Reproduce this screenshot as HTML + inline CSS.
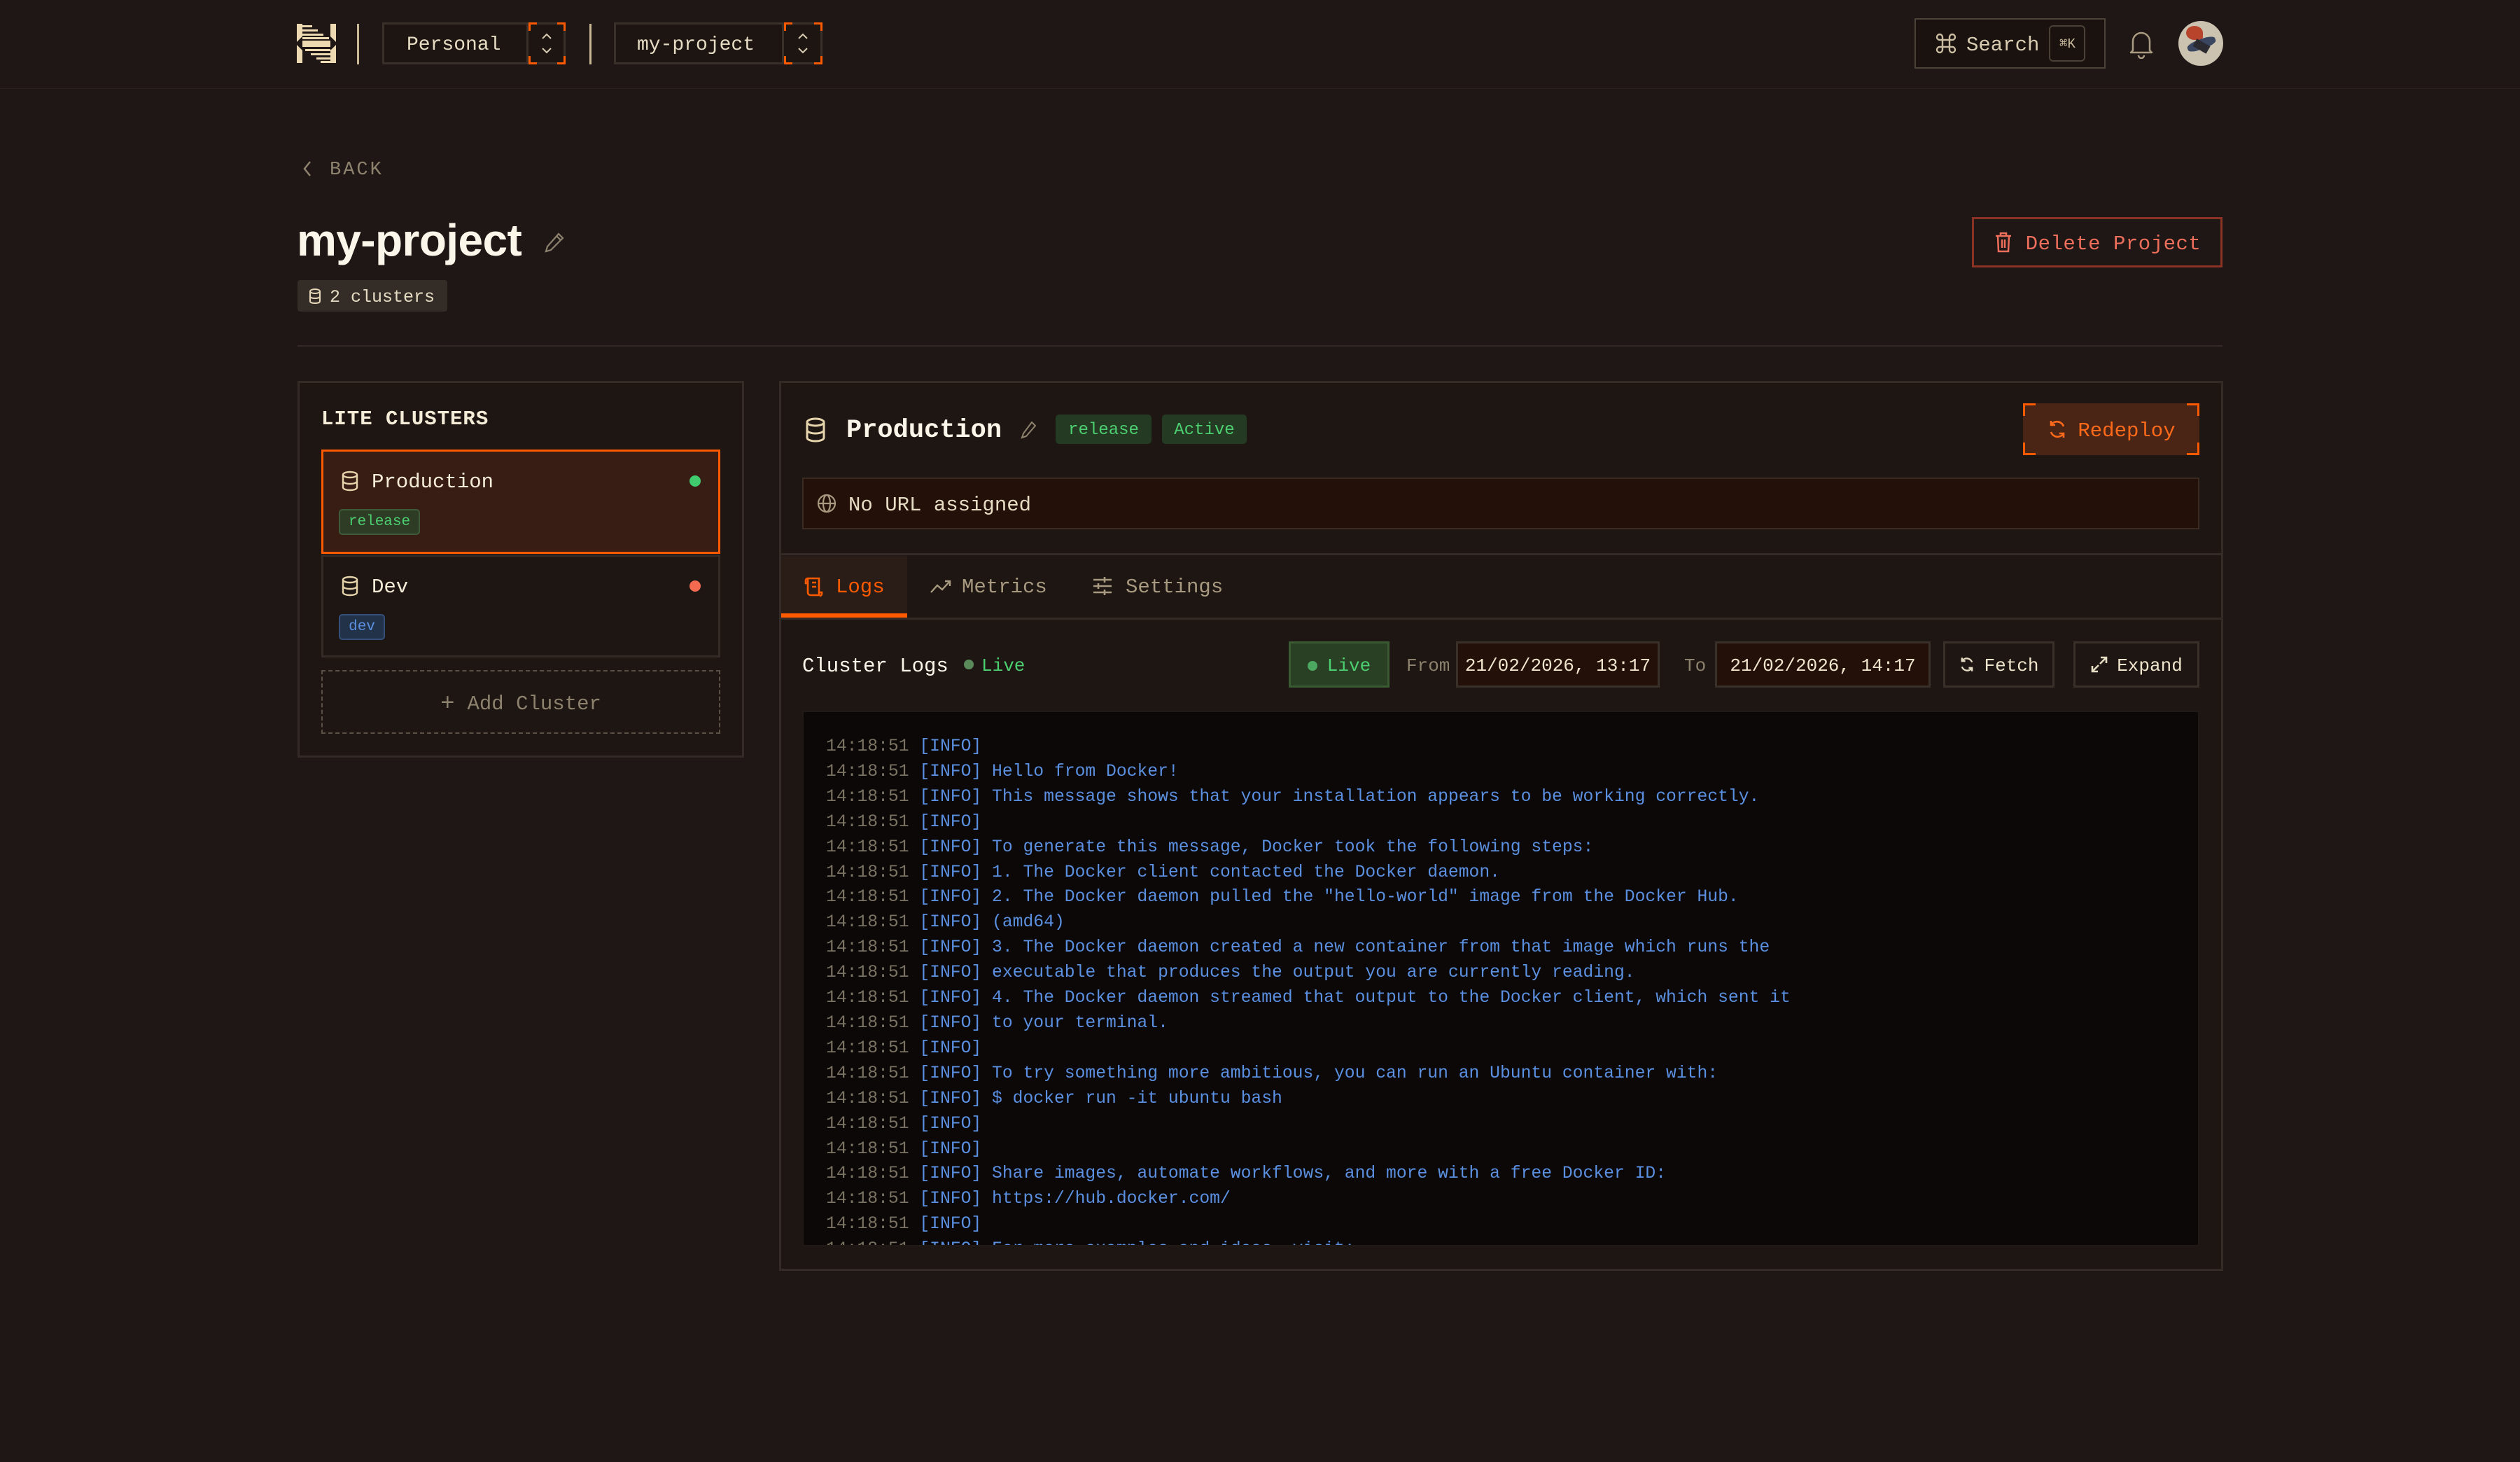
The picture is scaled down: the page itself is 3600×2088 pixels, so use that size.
<!DOCTYPE html>
<html><head><meta charset="utf-8"><style>
*{box-sizing:border-box;margin:0;padding:0}
body{width:3600px;height:2088px;background:#1f1715;font-family:"Liberation Mono",monospace;color:#efe4cc;position:relative;overflow:hidden}
.a{position:absolute}
.f{display:flex;align-items:center}
svg{display:block}
.sel{border:3px solid #3a302a;background:#1c1512;height:60px}
.corner{position:absolute;width:12px;height:12px;border-color:#ff5a00;border-style:solid}
.log{font-size:24.7px;line-height:35.9px;white-space:pre;color:#5b8fe0}
.log .t{color:#7a7262}
.btn{border:3px solid #3a302a;height:66px;font-size:26px;color:#efe4cc}
</style></head><body>

<!-- header -->
<svg class="a" style="left:422px;top:32px" width="60" height="60" viewBox="0 0 60 60">
<g fill="#ecd9b2">
<path d="M2 2h8v18l-8 8z"/><path d="M58 2h-8v18l8 8z"/>
<path d="M2 58h8V40l-8-8z"/><path d="M58 58h-8V40l8-8z"/>
<rect x="10" y="26" width="40" height="9"/>
<rect x="10" y="4" width="14" height="3"/><rect x="10" y="10" width="22" height="3"/><rect x="10" y="16" width="30" height="3"/><rect x="10" y="21" width="38" height="3"/>
<rect x="14" y="38" width="36" height="3"/><rect x="22" y="44" width="28" height="3"/><rect x="30" y="50" width="20" height="3"/><rect x="36" y="55" width="14" height="3"/>
</g></svg>
<div class="a" style="left:510px;top:34px;width:3px;height:58px;background:#c9b894"></div>
<div class="a sel f" style="left:546px;top:32px;width:262px">
 <span style="margin-left:32px;margin-top:4px;font-size:28px;color:#e6dcc4">Personal</span>
</div>
<div class="a" style="left:752px;top:32px;width:56px;height:60px;border-left:3px solid #3a302a">
 <div class="corner" style="left:0;top:0;border-width:3px 0 0 3px"></div><div class="corner" style="right:0;top:0;border-width:3px 3px 0 0"></div>
 <div class="corner" style="left:0;bottom:0;border-width:0 0 3px 3px"></div><div class="corner" style="right:0;bottom:0;border-width:0 3px 3px 0"></div>
 <svg class="a" style="left:18px;top:14px" width="16" height="32" viewBox="0 0 16 32"><path d="M2 9l6-6 6 6M2 23l6 6 6-6" stroke="#d8ccb2" stroke-width="2" fill="none"/></svg>
</div>
<div class="a" style="left:842px;top:34px;width:3px;height:58px;background:#c9b894"></div>
<div class="a sel f" style="left:877px;top:32px;width:298px">
 <span style="margin-left:30px;margin-top:4px;font-size:28px;color:#e6dcc4">my-project</span>
</div>
<div class="a" style="left:1117px;top:32px;width:58px;height:60px;border-left:3px solid #3a302a">
 <div class="corner" style="left:0;top:0;border-width:3px 0 0 3px"></div><div class="corner" style="right:0;top:0;border-width:3px 3px 0 0"></div>
 <div class="corner" style="left:0;bottom:0;border-width:0 0 3px 3px"></div><div class="corner" style="right:0;bottom:0;border-width:0 3px 3px 0"></div>
 <svg class="a" style="left:19px;top:14px" width="16" height="32" viewBox="0 0 16 32"><path d="M2 9l6-6 6 6M2 23l6 6 6-6" stroke="#d8ccb2" stroke-width="2" fill="none"/></svg>
</div>

<div class="a f" style="left:2735px;top:26px;width:273px;height:72px;border:2px solid #4a4236;background:#1a120e">
 <svg style="margin-left:28px" width="30" height="30" viewBox="0 0 30 30"><path d="M10 10h10v10H10zM10 10V6a4 4 0 1 0-4 4h4M20 10V6a4 4 0 1 1 4 4h-4M10 20v4a4 4 0 1 1-4-4h4M20 20v4a4 4 0 1 0 4-4h-4" stroke="#c9bca0" stroke-width="2.4" fill="none"/></svg>
 <span style="margin-left:14px;margin-top:4px;font-size:29px;color:#d8ccb2">Search</span>
 <span class="f" style="margin-left:14px;width:52px;height:52px;border:2px solid #4a4236;border-radius:6px;justify-content:center;font-size:19px;color:#c9bca0">⌘K</span>
</div>
<svg class="a" style="left:3041px;top:42px" width="36" height="42" viewBox="0 0 36 42"><path d="M6 30V17a12 12 0 0 1 24 0v13l3 3H3z M14 37a4 4 0 0 0 8 0" stroke="#a89a80" stroke-width="2.5" fill="none" stroke-linejoin="round"/></svg>
<div class="a" style="left:3112px;top:30px;width:64px;height:64px;border-radius:50%;background:#cbc3b0;overflow:hidden">
 <div class="a" style="left:11px;top:7px;width:24px;height:20px;border-radius:50% 50% 20% 50%;background:#b8442c"></div>
 <div class="a" style="left:12px;top:26px;width:42px;height:14px;background:#3a4660;transform:rotate(-20deg);border-radius:40%"></div>
 <div class="a" style="left:22px;top:30px;width:22px;height:12px;background:#2a2a30;transform:rotate(30deg)"></div>
</div>
<div class="a" style="left:0;top:126px;width:3600px;height:1px;background:#2a211d"></div>

<!-- back -->
<svg class="a" style="left:432px;top:228px" width="14" height="26" viewBox="0 0 14 26"><path d="M11 3L3 13l8 10" stroke="#8d826e" stroke-width="2.5" fill="none"/></svg>
<div class="a" style="left:471px;top:228px;font-size:27px;letter-spacing:3px;color:#8d826e">BACK</div>

<div class="a" style="left:424px;top:306px;font-family:'Liberation Sans',sans-serif;font-weight:bold;font-size:64px;color:#fbf6ea;letter-spacing:-0.6px">my-project</div>
<svg class="a" style="left:776px;top:330px" width="32" height="32" viewBox="0 0 32 32"><path d="M22 4l6 6L11 27l-7 2 2-7z M19 7l6 6" stroke="#8d826e" stroke-width="2.2" fill="none"/></svg>
<div class="a f" style="left:425px;top:400px;width:214px;height:45px;background:#342c26;border-radius:4px">
 <svg style="margin-left:16px" width="18" height="24" viewBox="0 0 18 24"><ellipse cx="9" cy="5" rx="7" ry="3" stroke="#e6d8b8" stroke-width="2" fill="none"/><path d="M2 5v14c0 2 3 3 7 3s7-1 7-3V5M2 12c0 2 3 3 7 3s7-1 7-3" stroke="#e6d8b8" stroke-width="2" fill="none"/></svg>
 <span style="margin-left:12px;margin-top:3px;font-size:25px;color:#e6dcc4">2 clusters</span>
</div>

<div class="a f" style="left:2817px;top:310px;width:358px;height:72px;border:3px solid #8a3325;justify-content:center">
 <svg width="28" height="32" viewBox="0 0 28 32"><path d="M3 7h22M10 7V3h8v4M6 7l1 22h14l1-22M12 12v12M16 12v12" stroke="#ee6e5c" stroke-width="2.5" fill="none"/></svg>
 <span style="margin-left:18px;margin-top:4px;font-size:29px;color:#ee6e5c;letter-spacing:.5px">Delete Project</span>
</div>
<div class="a" style="left:425px;top:493px;width:2750px;height:2px;background:#332a25"></div>

<!-- left panel -->
<div class="a" style="left:425px;top:544px;width:638px;height:538px;border:3px solid #342b26;background:#1e1612"></div>
<div class="a" style="left:459px;top:582px;font-size:29px;font-weight:bold;color:#f5ecd8;letter-spacing:1px">LITE CLUSTERS</div>
<div class="a" style="left:459px;top:642px;width:570px;height:149px;border:3px solid #ff5a00;background:#381d14"></div>
<svg class="a" style="left:488px;top:672px" width="24" height="30" viewBox="0 0 24 30"><ellipse cx="12" cy="6" rx="10" ry="4" stroke="#e6d4ac" stroke-width="2.4" fill="none"/><path d="M2 6v18c0 2.5 4.5 4 10 4s10-1.5 10-4V6M2 15c0 2.5 4.5 4 10 4s10-1.5 10-4" stroke="#e6d4ac" stroke-width="2.4" fill="none"/></svg>
<div class="a" style="left:531px;top:672px;font-size:29px;color:#f5ecd8">Production</div>
<div class="a" style="left:985px;top:679px;width:16px;height:16px;border-radius:50%;background:#3fcb6e"></div>
<div class="a f" style="left:484px;top:727px;width:116px;height:37px;border:2px solid #3e5a38;background:#2e3c26;border-radius:5px;justify-content:center;font-size:21px;color:#4ccf70">release</div>
<div class="a" style="left:459px;top:792px;width:570px;height:147px;border:3px solid #342b26"></div>
<svg class="a" style="left:488px;top:822px" width="24" height="30" viewBox="0 0 24 30"><ellipse cx="12" cy="6" rx="10" ry="4" stroke="#e6d4ac" stroke-width="2.4" fill="none"/><path d="M2 6v18c0 2.5 4.5 4 10 4s10-1.5 10-4V6M2 15c0 2.5 4.5 4 10 4s10-1.5 10-4" stroke="#e6d4ac" stroke-width="2.4" fill="none"/></svg>
<div class="a" style="left:531px;top:822px;font-size:29px;color:#f5ecd8">Dev</div>
<div class="a" style="left:985px;top:829px;width:16px;height:16px;border-radius:50%;background:#f26a50"></div>
<div class="a f" style="left:484px;top:877px;width:66px;height:37px;border:2px solid #34507a;background:#223249;border-radius:5px;justify-content:center;font-size:21px;color:#5b8fe0">dev</div>
<div class="a f" style="left:459px;top:957px;width:570px;height:91px;border:2px dashed #5a5045;justify-content:center;font-size:29px;color:#8d826e;padding-top:6px">
 <span style="font-size:34px;margin-right:18px">+</span>Add Cluster
</div>

<!-- right panel -->
<div class="a" style="left:1113px;top:544px;width:2063px;height:1271px;border:3px solid #342b26;background:#1e1612"></div>
<svg class="a" style="left:1150px;top:596px" width="30" height="36" viewBox="0 0 30 36"><ellipse cx="15" cy="7" rx="12" ry="5" stroke="#e6d4ac" stroke-width="3" fill="none"/><path d="M3 7v22c0 3 5.5 5 12 5s12-2 12-5V7M3 18c0 3 5.5 5 12 5s12-2 12-5" stroke="#e6d4ac" stroke-width="3" fill="none"/></svg>
<div class="a" style="left:1209px;top:594px;font-size:37px;font-weight:bold;color:#fbf6ea">Production</div>
<svg class="a" style="left:1456px;top:600px" width="26" height="28" viewBox="0 0 26 28"><path d="M18 3l5 5L10 23l-6 2 2-6z" stroke="#8d826e" stroke-width="2" fill="none"/></svg>
<div class="a f" style="left:1508px;top:592px;width:137px;height:42px;background:#243a22;border-radius:5px;justify-content:center;font-size:24px;color:#4ccf70;padding-top:3px">release</div>
<div class="a f" style="left:1660px;top:592px;width:121px;height:42px;background:#243a22;border-radius:5px;justify-content:center;font-size:24px;color:#4ccf70;padding-top:3px">Active</div>

<div class="a f" style="left:2890px;top:576px;width:252px;height:74px;background:#4a2415;justify-content:center">
 <div class="corner" style="left:0;top:0;border-width:3px 0 0 3px;width:18px;height:18px"></div><div class="corner" style="right:0;top:0;border-width:3px 3px 0 0;width:18px;height:18px"></div>
 <div class="corner" style="left:0;bottom:0;border-width:0 0 3px 3px;width:18px;height:18px"></div><div class="corner" style="right:0;bottom:0;border-width:0 3px 3px 0;width:18px;height:18px"></div>
 <svg width="30" height="30" viewBox="0 0 30 30"><path d="M24 11A10 10 0 0 0 6 9M6 19a10 10 0 0 0 18 2M6 3v6h6M24 27v-6h-6" stroke="#ff6a1a" stroke-width="2.6" fill="none"/></svg>
 <span style="margin-left:14px;margin-top:4px;font-size:29px;color:#ff6a1a">Redeploy</span>
</div>

<div class="a f" style="left:1146px;top:682px;width:1996px;height:74px;border:2px solid #3a2a22;background:#221009">
 <svg style="margin-left:18px" width="30" height="30" viewBox="0 0 30 30"><circle cx="15" cy="15" r="12" stroke="#a89a80" stroke-width="2.2" fill="none"/><ellipse cx="15" cy="15" rx="5" ry="12" stroke="#a89a80" stroke-width="2.2" fill="none"/><path d="M3 15h24" stroke="#a89a80" stroke-width="2.2"/></svg>
 <span style="margin-left:16px;margin-top:4px;font-size:29px;color:#e6dcc4">No URL assigned</span>
</div>

<div class="a" style="left:1116px;top:790px;width:2057px;height:3px;background:#342b26"></div>
<div class="a" style="left:1116px;top:794px;width:180px;height:88px;background:#2a1d17"></div>
<div class="a" style="left:1116px;top:876px;width:180px;height:6px;background:#ff5a00"></div>
<div class="a" style="left:1116px;top:882px;width:2057px;height:3px;background:#342b26"></div>
<svg class="a" style="left:1148px;top:822px" width="30" height="32" viewBox="0 0 30 32"><path d="M6 4h16v24H10a4 4 0 0 1-4-4zM6 4a3 3 0 0 0-3 3v4h3M12 10h6M12 16h6M22 24h4v2a3 3 0 0 1-3 3" stroke="#ff5a00" stroke-width="2.6" fill="none"/></svg>
<div class="a" style="left:1194px;top:822px;font-size:29px;color:#ff5a00">Logs</div>
<svg class="a" style="left:1328px;top:826px" width="32" height="24" viewBox="0 0 32 24"><path d="M2 20l9-10 7 6 11-12M22 4h7v7" stroke="#a89a80" stroke-width="2.4" fill="none"/></svg>
<div class="a" style="left:1374px;top:822px;font-size:29px;color:#a89a80">Metrics</div>
<svg class="a" style="left:1560px;top:822px" width="30" height="30" viewBox="0 0 30 30"><path d="M2 6h26M2 15h26M2 24h26" stroke="#a89a80" stroke-width="2.4"/><path d="M18 2v8M9 11v8M18 20v8" stroke="#a89a80" stroke-width="2.6"/></svg>
<div class="a" style="left:1608px;top:822px;font-size:29px;color:#a89a80">Settings</div>

<div class="a" style="left:1146px;top:935px;font-size:29px;color:#fbf6ea">Cluster Logs</div>
<div class="a" style="left:1377px;top:942px;width:14px;height:14px;border-radius:50%;background:#5a8a5a"></div>
<div class="a" style="left:1402px;top:936px;font-size:26px;color:#4ccf70">Live</div>

<div class="a f btn" style="left:1841px;top:916px;width:144px;background:#2a4024;border-color:#3a5a34;justify-content:center;color:#4ccf70;padding-top:4px">
 <span style="width:14px;height:14px;border-radius:50%;background:#4ca860;margin-right:14px"></span>Live</div>
<div class="a" style="left:2009px;top:936px;font-size:26px;color:#8d826e">From</div>
<div class="a f btn" style="left:2080px;top:916px;width:291px;background:#221009;justify-content:center;padding-top:4px">21/02/2026, 13:17</div>
<div class="a" style="left:2406px;top:936px;font-size:26px;color:#8d826e">To</div>
<div class="a f btn" style="left:2450px;top:916px;width:308px;background:#221009;justify-content:center;padding-top:4px">21/02/2026, 14:17</div>
<div class="a f btn" style="left:2776px;top:916px;width:159px;justify-content:center">
 <svg width="24" height="26" viewBox="0 0 30 30"><path d="M24 11A10 10 0 0 0 6 9M6 19a10 10 0 0 0 18 2M6 3v6h6M24 27v-6h-6" stroke="#e6dcc4" stroke-width="3" fill="none"/></svg><span style="margin-left:12px;margin-top:4px">Fetch</span></div>
<div class="a f btn" style="left:2962px;top:916px;width:180px;justify-content:center">
 <svg width="26" height="26" viewBox="0 0 26 26"><path d="M15 3h8v8M23 3l-9 9M11 23H3v-8M3 23l9-9" stroke="#e6dcc4" stroke-width="2.6" fill="none"/></svg><span style="margin-left:12px;margin-top:4px">Expand</span></div>

<div class="a" style="left:1146px;top:1015px;width:1996px;height:765px;background:#0b0807;border:2px solid #211915;overflow:hidden">
<div class="log" style="padding:32px 0 0 32px"><span class="t">14:18:51</span> [INFO]
<span class="t">14:18:51</span> [INFO] Hello from Docker!
<span class="t">14:18:51</span> [INFO] This message shows that your installation appears to be working correctly.
<span class="t">14:18:51</span> [INFO]
<span class="t">14:18:51</span> [INFO] To generate this message, Docker took the following steps:
<span class="t">14:18:51</span> [INFO] 1. The Docker client contacted the Docker daemon.
<span class="t">14:18:51</span> [INFO] 2. The Docker daemon pulled the "hello-world" image from the Docker Hub.
<span class="t">14:18:51</span> [INFO] (amd64)
<span class="t">14:18:51</span> [INFO] 3. The Docker daemon created a new container from that image which runs the
<span class="t">14:18:51</span> [INFO] executable that produces the output you are currently reading.
<span class="t">14:18:51</span> [INFO] 4. The Docker daemon streamed that output to the Docker client, which sent it
<span class="t">14:18:51</span> [INFO] to your terminal.
<span class="t">14:18:51</span> [INFO]
<span class="t">14:18:51</span> [INFO] To try something more ambitious, you can run an Ubuntu container with:
<span class="t">14:18:51</span> [INFO] $ docker run -it ubuntu bash
<span class="t">14:18:51</span> [INFO]
<span class="t">14:18:51</span> [INFO]
<span class="t">14:18:51</span> [INFO] Share images, automate workflows, and more with a free Docker ID:
<span class="t">14:18:51</span> [INFO] https://hub.docker.com/
<span class="t">14:18:51</span> [INFO]
<span class="t">14:18:51</span> [INFO] For more examples and ideas, visit:</div>
</div>

</body></html>
